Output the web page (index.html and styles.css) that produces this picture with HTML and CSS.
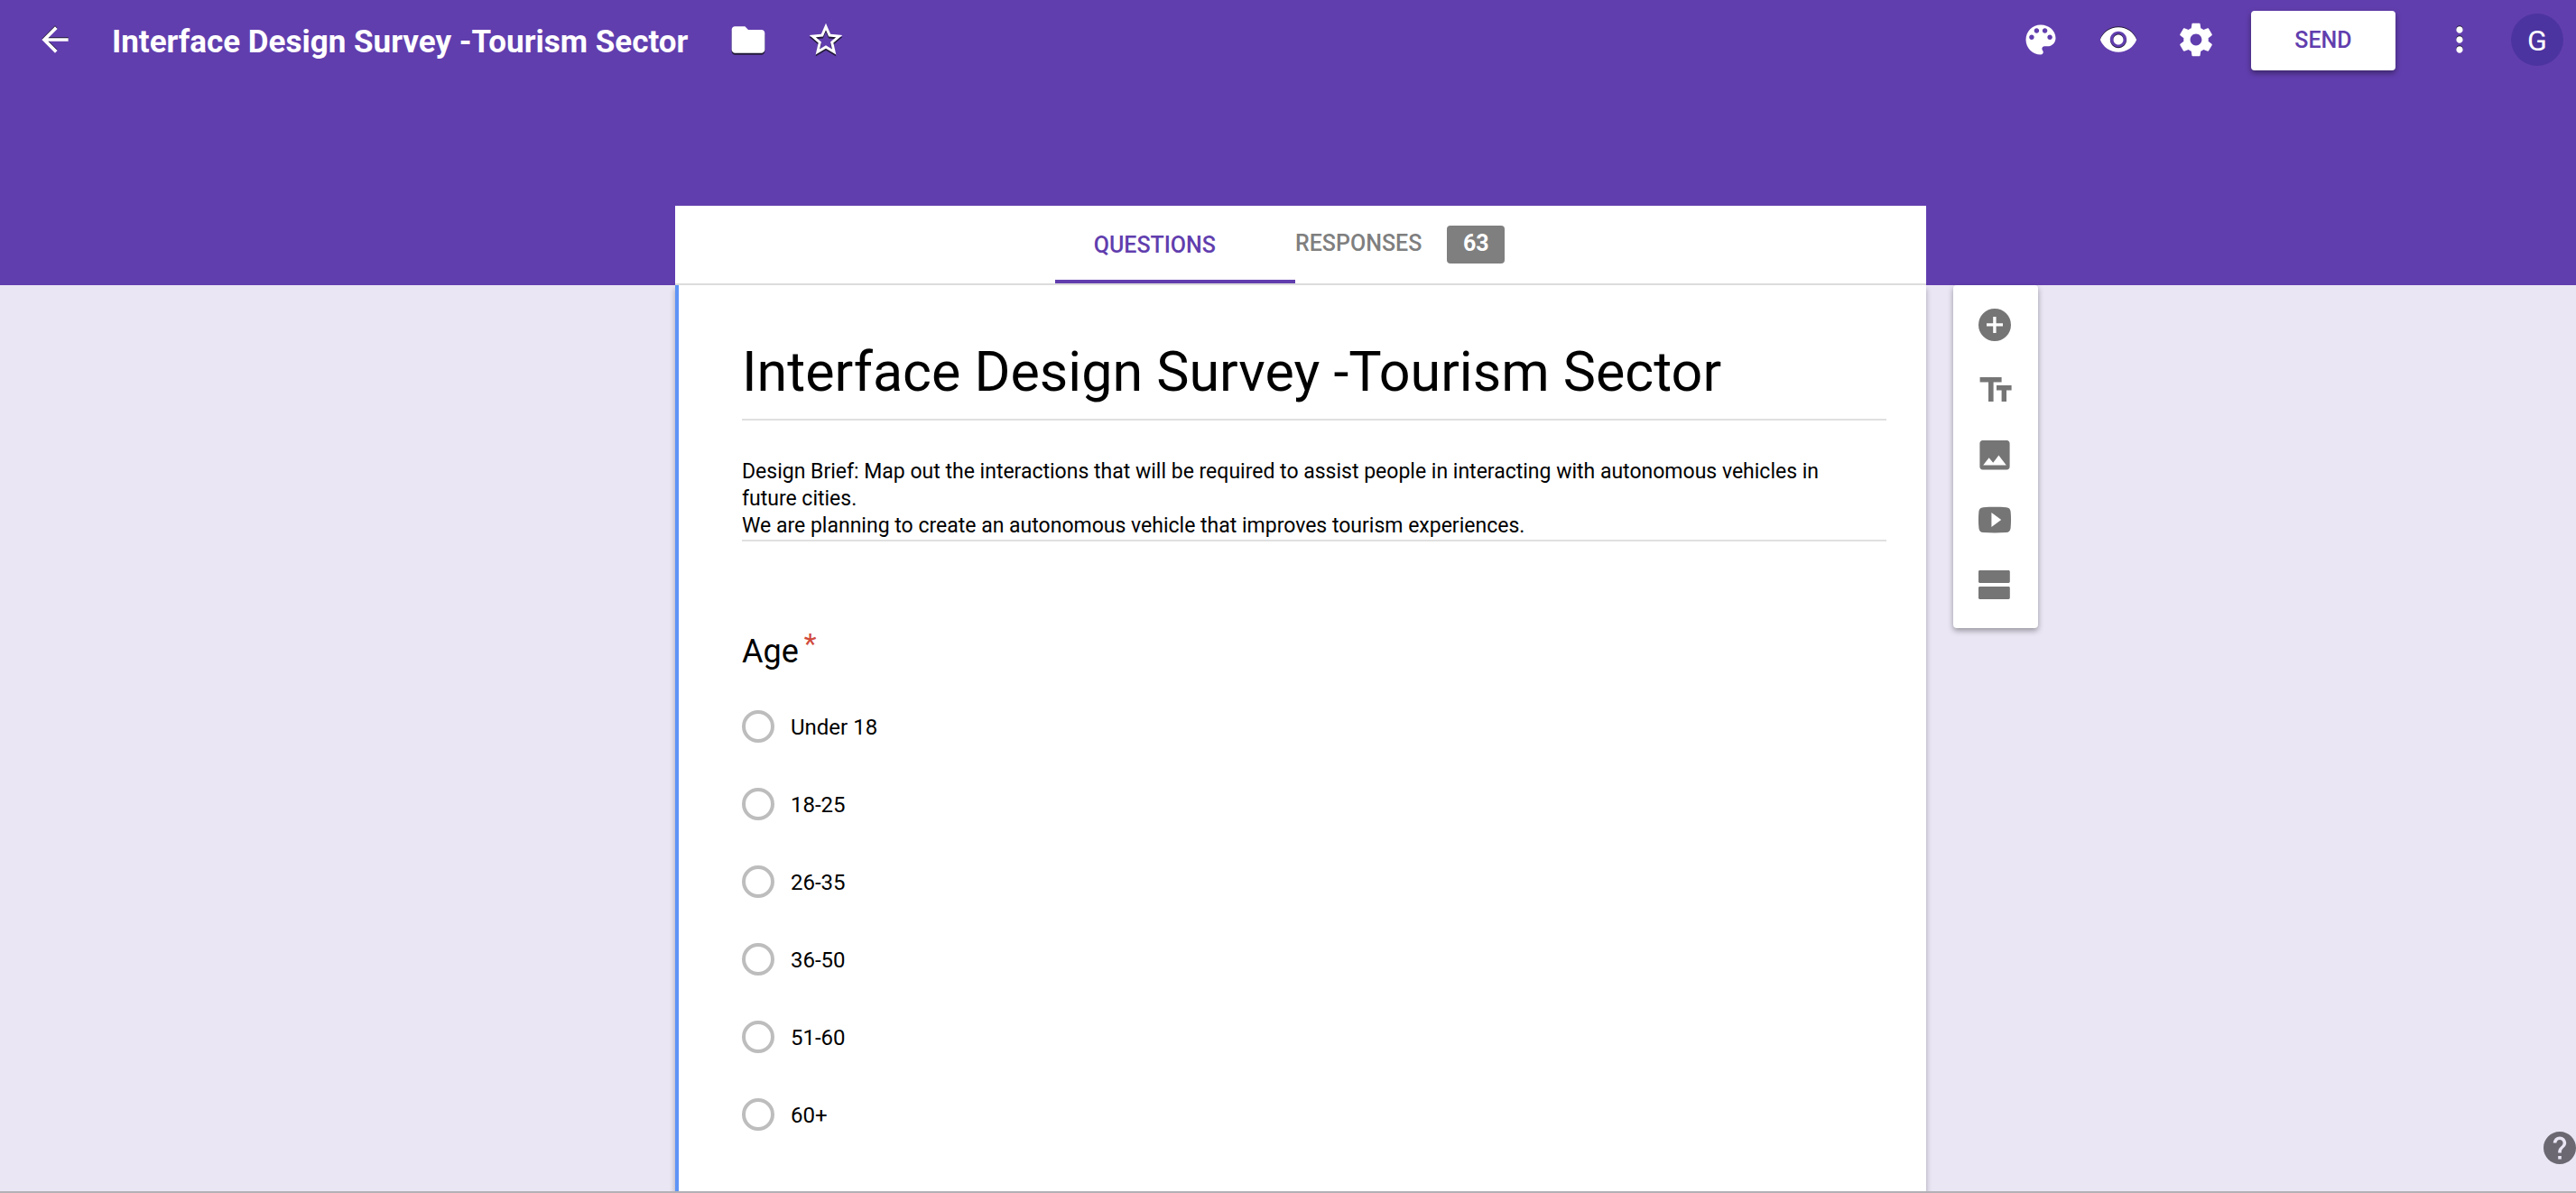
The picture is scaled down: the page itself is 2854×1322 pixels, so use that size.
FILE: index.html
```html
<!DOCTYPE html>
<html lang="en">
<head>
<meta charset="utf-8">
<title>Interface Design Survey -Tourism Sector</title>
<link rel="stylesheet" href="styles.css">
</head>
<body>
<header class="topbar">
  <button class="icon-button" type="button" aria-label="Back"><svg class="icon icon-raised" viewBox="0 0 24 24"><path d="M20 11H7.83l5.59-5.59L12 4l-8 8 8 8 1.41-1.41L7.83 13H20z"/></svg></button>
  <span class="doc-name">Interface Design Survey -Tourism Sector</span>
  <button class="icon-button" type="button" aria-label="Move to folder"><svg class="icon icon-lifted" viewBox="0 0 24 24"><path d="M10 4H4c-1.100 0-1.990.9-1.990 2L2 18c0 1.100.9 2 2 2h16c1.100 0 2-.9 2-2V8c0-1.100-.9-2-2-2h-8z"/></svg></button>
  <button class="icon-button" type="button" aria-label="Star"><svg class="icon icon-lifted" viewBox="0 0 24 24"><path d="M22 9.240l-7.190-.62L12 2 9.190 8.630 2 9.240l5.460 4.730L5.820 21 12 17.270 18.180 21l-1.630-7.030zM12 15.400l-3.760 2.270 1-4.280-3.320-2.880 4.380-.38L12 6.100l1.710 4.040 4.380.38-3.320 2.880 1 4.280z"/></svg></button>
  <div class="actions">
    <button class="icon-button" type="button" aria-label="Color palette"><svg class="icon" viewBox="0 0 24 24"><path d="M12 3c-4.970 0-9 4.030-9 9s4.030 9 9 9c.83 0 1.500-.67 1.500-1.500 0-.39-.15-.74-.39-1.010-.23-.26-.38-.61-.38-.99 0-.83.67-1.500 1.500-1.500H16c2.760 0 5-2.240 5-5 0-4.420-4.030-8-9-8zm-5.500 9c-.83 0-1.500-.67-1.500-1.500S5.670 9 6.500 9 8 9.670 8 10.500 7.330 12 6.500 12zm3-4C8.670 8 8 7.330 8 6.500S8.670 5 9.500 5s1.500.67 1.500 1.500S10.330 8 9.500 8zm5 0c-.83 0-1.500-.67-1.500-1.500S13.670 5 14.500 5s1.500.67 1.500 1.500S15.330 8 14.500 8zm3 4c-.83 0-1.500-.67-1.500-1.500S16.670 9 17.500 9s1.500.67 1.500 1.500-.67 1.500-1.500 1.500z"/></svg></button>
    <button class="icon-button" type="button" aria-label="Preview"><svg class="icon icon-raised" viewBox="0 0 24 24"><path d="M12 4.500C7 4.500 2.730 7.610 1 12c1.730 4.390 6 7.500 11 7.500s9.270-3.110 11-7.500c-1.730-4.390-6-7.500-11-7.500zM12 17c-2.760 0-5-2.240-5-5s2.240-5 5-5 5 2.240 5 5-2.240 5-5 5zm0-8c-1.660 0-3 1.340-3 3s1.340 3 3 3 3-1.340 3-3-1.340-3-3-3z"/></svg></button>
    <button class="icon-button" type="button" aria-label="Settings"><svg class="icon" viewBox="0 0 24 24"><path d="M19.430 12.980c.04-.32.07-.64.07-.98s-.03-.66-.07-.98l2.110-1.650c.19-.15.24-.42.12-.64l-2-3.460c-.12-.22-.39-.3-.61-.22l-2.490 1c-.52-.4-1.080-.73-1.690-.98l-.38-2.650C14.460 2.180 14.250 2 14 2h-4c-.25 0-.46.18-.49.42l-.38 2.650c-.61.25-1.170.59-1.690.98l-2.490-1c-.23-.09-.49 0-.61.22l-2 3.460c-.13.22-.07.49.12.64l2.110 1.650c-.04.32-.07.65-.07.98s.03.66.07.98l-2.110 1.650c-.19.15-.24.42-.12.64l2 3.460c.12.22.39.3.61.22l2.490-1c.52.4 1.080.73 1.690.98l.38 2.650c.03.24.24.42.49.42h4c.25 0 .46-.18.49-.42l.38-2.650c.61-.25 1.170-.59 1.690-.98l2.490 1c.23.09.49 0 .61-.22l2-3.460c.12-.22.07-.49-.12-.64zM12 15.500c-1.930 0-3.500-1.570-3.500-3.500s1.570-3.500 3.500-3.500 3.500 1.570 3.500 3.500-1.570 3.500-3.500 3.500z"/></svg></button>
    <button class="send" type="button">SEND</button>
    <button class="icon-button" type="button" aria-label="More"><svg class="icon icon-raised" viewBox="0 0 24 24"><path d="M12 8c1.100 0 2-.9 2-2s-.9-2-2-2-2 .9-2 2 .9 2 2 2zm0 2c-1.100 0-2 .9-2 2s.9 2 2 2 2-.9 2-2-.9-2-2-2zm0 6c-1.100 0-2 .9-2 2s.9 2 2 2 2-.9 2-2-.9-2-2-2z"/></svg></button>
    <button class="avatar" type="button" aria-label="Account">G</button>
  </div>
</header>
<main class="workspace">
  <div class="form">
    <nav class="tabs">
      <button class="tab tab-active" type="button">QUESTIONS</button>
      <button class="tab tab-responses" type="button"><span class="tab-label">RESPONSES</span><span class="count">63</span></button>
    </nav>
    <section class="sheet">
      <h1 class="form-title">Interface Design Survey -Tourism Sector</h1>
      <p class="form-brief">Design Brief: Map out the interactions that will be required to assist people in interacting with autonomous vehicles in future cities.<br>We are planning to create an autonomous vehicle that improves tourism experiences.</p>
      <fieldset class="question">
        <legend class="question-title">Age<span class="required">*</span></legend>
        <label class="option"><input class="radio" type="radio" name="age"><span class="option-text">Under 18</span></label>
        <label class="option"><input class="radio" type="radio" name="age"><span class="option-text">18-25</span></label>
        <label class="option"><input class="radio" type="radio" name="age"><span class="option-text">26-35</span></label>
        <label class="option"><input class="radio" type="radio" name="age"><span class="option-text">36-50</span></label>
        <label class="option"><input class="radio" type="radio" name="age"><span class="option-text">51-60</span></label>
        <label class="option"><input class="radio" type="radio" name="age"><span class="option-text">60+</span></label>
      </fieldset>
    </section>
  </div>
  <aside class="toolbox">
    <button class="tool" type="button" aria-label="Add question"><svg class="tool-icon" viewBox="0 0 24 24"><path d="M12 3a9 9 0 1 0 0 18 9 9 0 0 0 0-18zm4.500 9.800h-3.700v3.700h-1.700v-3.700H7.500v-1.700h3.600V7.500h1.700v3.600h3.700z"/></svg></button>
    <button class="tool" type="button" aria-label="Add title and description"><svg class="tool-icon" viewBox="0 0 24 24"><path d="M3.800 5h12v2.700h-4.500v10.800H8.500V7.700H3.800zM13 9.500h8.300v2.700h-2.800v6.300h-2.700v-6.300H13z"/></svg></button>
    <button class="tool" type="button" aria-label="Add image"><svg class="tool-icon" viewBox="0 0 24 24"><path d="M5.300 4h13.400c.9 0 1.600.7 1.600 1.600v13c0 .9-.7 1.600-1.600 1.600H5.300c-.9 0-1.600-.7-1.600-1.600v-13C3.700 4.700 4.400 4 5.300 4zm.3 13.800h12.800l-4.200-5.500-3.100 4.100-2.300-2.800z"/></svg></button>
    <button class="tool" type="button" aria-label="Add video"><svg class="tool-icon" viewBox="0 0 24 24"><path d="M5.600 5.100c4-.3 8.800-.3 12.800 0 1.500.1 2.200.9 2.400 2.300.3 3 .3 6.200 0 9.200-.2 1.500-1 2.300-2.400 2.400-4 .3-8.800.3-12.800 0-1.500-.1-2.200-.9-2.400-2.400-.3-3-.3-6.200 0-9.200.2-1.400 1-2.200 2.400-2.300zM10.200 8v8l5.400-4z"/></svg></button>
    <button class="tool" type="button" aria-label="Add section"><svg class="tool-icon" viewBox="0 0 24 24"><path d="M3.700 4h16c.4 0 .7.300.7.700v5.600c0 .4-.3.700-.7.700h-16c-.4 0-.7-.3-.7-.7V4.700c0-.4.3-.7.7-.7zm0 9h16c.4 0 .7.300.7.700v5.600c0 .4-.3.700-.7.700h-16c-.4 0-.7-.3-.7-.7v-5.600c0-.4.3-.7.7-.7z"/></svg></button>
  </aside>
</main>
<button class="help" type="button" aria-label="Help"><svg class="help-icon" viewBox="2 2 20 20"><path d="M12 2C6.480 2 2 6.480 2 12s4.480 10 10 10 10-4.480 10-10S17.520 2 12 2zm1 17h-2v-2h2zm2.070-7.750l-.9.920C13.450 12.900 13 13.500 13 15h-2v-.5c0-1.100.45-2.100 1.170-2.830l1.240-1.260c.37-.36.590-.86.590-1.410 0-1.100-.9-2-2-2s-2 .9-2 2H8c0-2.210 1.790-4 4-4s4 1.790 4 4c0 .88-.36 1.680-.93 2.250z"/></svg></button>
</body>
</html>
```
FILE: styles.css
```css
* { box-sizing: border-box; }

body {
  margin: 0;
  min-height: 100vh;
  display: flex;
  flex-direction: column;
  background: linear-gradient(#613eae 316px, #eae6f4 316px);
  border-bottom: 2px solid #b3b0b6;
  color: #000;
  font: 24px/30px Roboto, sans-serif;
}

button {
  margin: 0;
  padding: 0;
  border: 0;
  background: none;
  font: inherit;
  color: inherit;
  cursor: pointer;
}

.topbar {
  height: 88px;
  padding: 0 14px 0 38px;
  display: flex;
  align-items: center;
  color: #fff;
}

.icon-button {
  width: 46px;
  height: 46px;
  margin-right: 40px;
  flex: none;
  display: grid;
  place-items: center;
}

.icon { display: block; width: 44px; height: 44px; fill: currentColor; }
.icon-lifted { filter: drop-shadow(0 2px 0 #221a38); }
.icon-raised { filter: drop-shadow(0 -1px 0 #221a38); }

.doc-name {
  margin-right: 44px;
  padding-top: 6px;
  font-size: 35px;
  font-weight: 700;
  line-height: 44px;
  white-space: nowrap;
}

.actions { margin-left: auto; display: flex; align-items: center; }

.send {
  width: 160px;
  height: 66px;
  margin: 2px 48px 0 -2px;
  border-radius: 4px;
  background: #fff;
  box-shadow: 0 3px 6px rgba(0, 0, 0, 0.4);
  color: #613eae;
  font-size: 25px;
  font-weight: 500;
}

.avatar {
  width: 58px;
  height: 58px;
  margin-left: -6px;
  padding-top: 2px;
  border-radius: 50%;
  background: #4c34a0;
  font-size: 32px;
}

.workspace {
  flex: 1;
  margin-top: 140px;
  padding-left: 28px;
  display: grid;
  grid-template-columns: 1fr minmax(0, 1386px) 1fr;
}

.form { grid-column: 2; display: flex; flex-direction: column; }

.tabs {
  height: 88px;
  display: flex;
  justify-content: center;
  border-bottom: 2px solid #e0e0e0;
  background: #fff;
  color: #7f7f7f;
  font-size: 25px;
  font-weight: 500;
}

.tab { display: flex; align-items: center; }
.tab-active { padding: 6px 88px 0 43px; border-bottom: 4px solid #613eae; color: #613eae; }
.tab-responses { padding-right: 46px; }
.tab-label { padding-bottom: 2px; }

.count {
  width: 64px;
  margin-left: 28px;
  padding-bottom: 2px;
  border-radius: 4px;
  background: #7f7f7f;
  color: #fff;
  font-weight: 700;
  line-height: 40px;
}

.sheet {
  flex: 1;
  padding: 64px 44px 0 70px;
  border-left: 4px solid #5e94f6;
  background: #fff;
  box-shadow: 0 4px 6px rgba(0, 0, 0, 0.3);
}

.form-title {
  margin: 0 0 40px;
  padding-bottom: 20px;
  border-bottom: 2px solid #e0e0e0;
  font-size: 61px;
  font-weight: 400;
  line-height: 64px;
}

.form-brief { margin: 0; padding: 2px 16px 0 0; border-bottom: 2px solid #e0e0e0; font-size: 23px; }

.question { margin: 98px 0 0; padding: 0; border: 0; }
.question-title { padding: 0; font-size: 36px; line-height: 48px; }
.required { margin-left: 6px; color: #d14a3c; font-size: 32px; line-height: 0; vertical-align: 10px; }

.option { height: 36px; margin-bottom: 50px; display: flex; align-items: center; gap: 18px; }
.question-title + .option { margin-top: 41px; }
.option-text { padding-top: 2px; }

.radio {
  appearance: none;
  width: 36px;
  height: 36px;
  margin: 0;
  border: 4px solid #bdbdbd;
  border-radius: 50%;
}

.toolbox {
  grid-column: 3;
  justify-self: start;
  align-self: start;
  width: 94px;
  margin: 88px 0 0 30px;
  padding: 8px 0 12px;
  border-radius: 4px;
  background: #fff;
  box-shadow: 0 3px 6px rgba(0, 0, 0, 0.35);
  color: #757575;
}

.tool { width: 92px; height: 72px; display: grid; place-items: center; }
.tool-icon { display: block; width: 48px; height: 48px; fill: currentColor; }

.help { position: fixed; right: 0; bottom: 32px; width: 36px; height: 36px; color: #6c6872; }
.help-icon { display: block; width: 36px; height: 36px; fill: currentColor; }
```
